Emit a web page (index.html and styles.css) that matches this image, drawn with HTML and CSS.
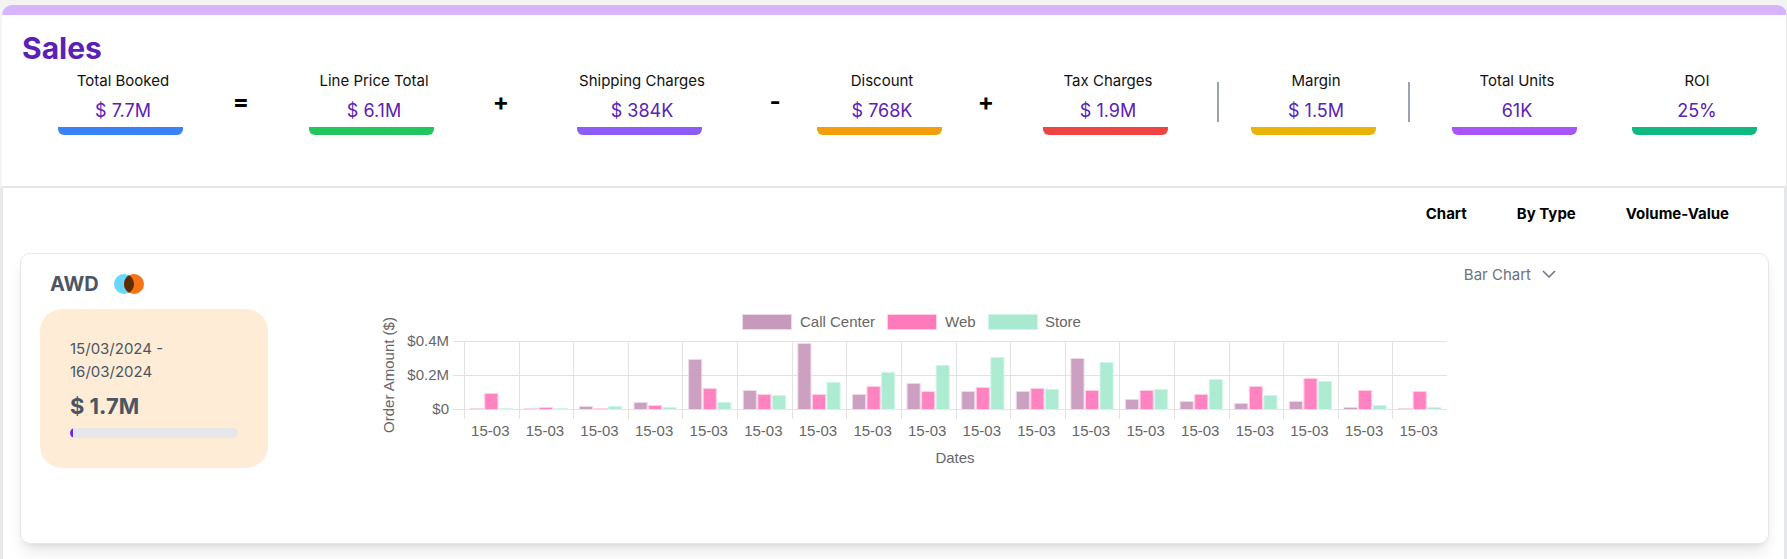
FILE: index.html
```html
<!DOCTYPE html>
<html lang="en">

<head>
    <meta charset="UTF-8">
    <meta name="viewport" content="width=device-width, initial-scale=1.0">
    <title>Sales</title>
    <link rel="stylesheet" href="styles.css">
</head>

<body>
    <header class="summary">
        <h1>Sales</h1>
        <div class="stats">
            <div class="stat">
                <div class="stat-label">Total Booked</div>
                <div class="stat-value">$ 7.7M</div>
                <div class="stat-bar blue"></div>
            </div>
            <div class="op op-1">=</div>
            <div class="stat">
                <div class="stat-label">Line Price Total</div>
                <div class="stat-value">$ 6.1M</div>
                <div class="stat-bar green"></div>
            </div>
            <div class="op op-2">+</div>
            <div class="stat">
                <div class="stat-label">Shipping Charges</div>
                <div class="stat-value">$ 384K</div>
                <div class="stat-bar violet"></div>
            </div>
            <div class="op op-3">-</div>
            <div class="stat">
                <div class="stat-label">Discount</div>
                <div class="stat-value">$ 768K</div>
                <div class="stat-bar amber"></div>
            </div>
            <div class="op op-4">+</div>
            <div class="stat">
                <div class="stat-label">Tax Charges</div>
                <div class="stat-value">$ 1.9M</div>
                <div class="stat-bar red"></div>
            </div>
            <div class="divider divider-1"></div>
            <div class="stat">
                <div class="stat-label">Margin</div>
                <div class="stat-value">$ 1.5M</div>
                <div class="stat-bar yellow"></div>
            </div>
            <div class="divider divider-2"></div>
            <div class="stat stat-units">
                <div class="stat-label">Total Units</div>
                <div class="stat-value">61K</div>
                <div class="stat-bar purple"></div>
            </div>
            <div class="stat">
                <div class="stat-label">ROI</div>
                <div class="stat-value">25%</div>
                <div class="stat-bar emerald"></div>
            </div>
        </div>
    </header>

    <main class="panel">
        <nav class="toolbar">
            <span>Chart</span>
            <span>By Type</span>
            <span>Volume-Value</span>
        </nav>

        <section class="card">
            <div class="card-head">
                <h2>AWD</h2>
                <svg class="brand" width="30" height="20" viewBox="0 0 30 20">
                    <circle cx="10" cy="10" r="10" fill="#67d7ff" />
                    <circle cx="20" cy="10" r="10" fill="#f97316" />
                    <path d="M15 1.34A10 10 0 0 1 15 18.66A10 10 0 0 1 15 1.34Z" fill="#5c2d00" />
                </svg>
                <div class="chart-select">
                    Bar Chart
                    <svg width="14" height="8" viewBox="0 0 14 8">
                        <path d="M1 1l6 6 6-6" fill="none" stroke="#6b7280" stroke-width="1.5" />
                    </svg>
                </div>
            </div>
            <div class="card-body">
                <div class="period">
                    <div class="period-dates">15/03/2024 - 16/03/2024</div>
                    <div class="period-total">$ 1.7M</div>
                    <div class="progress">
                        <div class="progress-fill" style="width: 2%"></div>
                    </div>
                </div>
                <svg id="chart" class="chart" width="1100" height="180" viewBox="370 300 1100 180"></svg>
            </div>
        </section>
    </main>

    <script src="chart.js"></script>
</body>

</html>
```

FILE: styles.css
```css
* {
    box-sizing: border-box;
}

body {
    font-family: Inter, Arial, sans-serif;
    background-color: #f3f3f3;
    margin: 0;
    padding: 5px 0 0;
    overflow: hidden;
}

h1,
h2 {
    margin: 0;
}

.summary {
    height: 183px;
    margin: 0 0 0 2px;
    width: 1785px;
    background-color: #fff;
    border-top: 10px solid #d8b4fe;
    border-bottom: 2px solid #e5e7eb;
    border-right: 1px solid #e5e7eb;
    border-radius: 10px 10px 0 0;
    padding: 15px 0 0 20px;
}

h1 {
    font-size: 30px;
    line-height: 36px;
    font-weight: 700;
    color: #5b21b6;
}

.stats {
    display: flex;
    align-items: flex-start;
    margin-top: 5px;
    padding-left: 36px;
}

.stat {
    width: 130px;
    flex: none;
    text-align: center;
}

.stat-units {
    margin-right: 50px;
}

.stat-label {
    font-size: 15px;
    line-height: 20px;
    color: #111;
}

.stat-value {
    margin-top: 8px;
    font-size: 18px;
    line-height: 24px;
    color: #5b21b6;
}

.stat-bar {
    width: 125px;
    height: 8px;
    margin-top: 4px;
    border-radius: 0 0 6px 6px;
}

.blue { background-color: #3b82f6; }
.green { background-color: #22c55e; }
.violet { background-color: #8b5cf6; }
.amber { background-color: #f59e0b; }
.red { background-color: #ef4444; }
.yellow { background-color: #eab308; }
.purple { background-color: #a855f7; }
.emerald { background-color: #10b981; }

.op {
    width: 20px;
    flex: none;
    margin-top: 15px;
    text-align: center;
    font-size: 24px;
    line-height: 32px;
    font-weight: 700;
    color: #000;
}

.op-1 { margin-left: 43px; margin-right: 58px; }
.op-2 { margin-left: 52px; margin-right: 66px; }
.op-3 { margin-left: 58px; margin-right: 32px; }
.op-4 { margin-left: 29px; margin-right: 47px; }

.divider {
    width: 2px;
    height: 40px;
    flex: none;
    margin-top: 11px;
    background-color: #9ca3af;
}

.divider-1 { margin-left: 44px; margin-right: 32px; }
.divider-2 { margin-left: 27px; margin-right: 42px; }

.panel {
    height: 371px;
    margin-left: 0;
    width: 1787px;
    background-color: #fff;
    border-left: 3px solid #e5e7eb;
    border-right: 3px solid #e5e7eb;
    padding: 0 15px 0 17px;
}

.toolbar {
    display: flex;
    justify-content: flex-end;
    gap: 50px;
    height: 65px;
    padding: 16px 40px 0 0;
    font-size: 15px;
    line-height: 20px;
    font-weight: 700;
    color: #000;
}

.card {
    height: 291px;
    background-color: #fff;
    border: 1px solid #e5e7eb;
    border-radius: 10px;
    box-shadow: 0 10px 15px -3px rgba(0, 0, 0, 0.1), 0 4px 6px -4px rgba(0, 0, 0, 0.1);
}

.card-head {
    display: flex;
    align-items: center;
    height: 20px;
    margin-top: 20px;
    padding-left: 29px;
}

h2 {
    font-size: 20px;
    line-height: 20px;
    font-weight: 700;
    color: #4b5563;
}

.brand {
    margin-left: 15px;
}

.chart-select {
    display: flex;
    align-items: center;
    gap: 11px;
    margin-left: auto;
    margin-right: 212px;
    margin-top: -20px;
    font-size: 15px;
    color: #6b7280;
}

.card-body {
    display: flex;
    align-items: flex-start;
    margin-top: 15px;
    padding-left: 19px;
}

.period {
    width: 228px;
    height: 159px;
    flex: none;
    padding: 28px 30px 0;
    background-color: #feecd6;
    border-radius: 22px;
}

.period-dates {
    font-size: 15px;
    line-height: 23px;
    color: #4b5563;
}

.period-total {
    margin-top: 8px;
    font-size: 22px;
    line-height: 30px;
    font-weight: 700;
    color: #4b5563;
}

.progress {
    height: 10px;
    margin-top: 7px;
    background-color: #e5e7eb;
    border-radius: 5px;
    overflow: hidden;
}

.progress-fill {
    height: 100%;
    background-color: #6d28d9;
}

.chart {
    flex: none;
    margin-top: -9px;
    margin-left: 102px;
}

.chart text {
    font-family: "Liberation Sans", Arial, sans-serif;
    font-size: 15px;
    fill: #666;
}
```

FILE: chart.js
```js
// Heights of the bars in pixels above the zero line: call center, web, store
const data = [
    [1, 16, 1], [1, 2, 1], [3, 1, 3], [7, 4, 2], [50, 21, 7], [19, 15, 14],
    [66, 15, 27], [15, 23, 37], [26, 18, 44], [18, 22, 52], [18, 21, 20], [51, 19, 47],
    [10, 19, 20], [8, 15, 30], [6, 23, 14], [8, 31, 28], [2, 19, 4], [1, 18, 2]
];

const series = [
    { name: 'Call Center', fill: '#c799bb', edge: '#ecdae8', box: 742, text: 800 },
    { name: 'Web', fill: '#ff7abb', edge: '#ffcfe5', box: 887, text: 945 },
    { name: 'Store', fill: '#a8e9d0', edge: '#d3f5e8', box: 988, text: 1045 }
];

const chart = document.getElementById('chart');
const left = 464;
const right = 1447;
const zero = 409.5;
const step = (right - left) / data.length;

function add(tag, attrs, text) {
    const el = document.createElementNS('http://www.w3.org/2000/svg', tag);
    for (const key in attrs) {
        el.setAttribute(key, attrs[key]);
    }
    if (text) el.textContent = text;
    chart.appendChild(el);
    return el;
}

function line(x1, y1, x2, y2) {
    add('line', { x1, y1, x2, y2, stroke: '#e2e2e2', 'stroke-width': 1 });
}

// Grid
[[341.5, '$0.4M'], [375.5, '$0.2M'], [zero, '$0']].forEach(function (tick) {
    line(453, tick[0], right, tick[0]);
    add('text', { x: 449, y: tick[0] + 4.5, 'text-anchor': 'end' }, tick[1]);
});

for (let i = 0; i < data.length; i++) {
    const x = Math.round(left + i * step) + 0.5;
    line(x, 341, x, 419);
    add('text', { x: left + (i + 0.5) * step - 1, y: 436, 'text-anchor': 'middle' }, '15-03');
}

// Bars
data.forEach(function (group, i) {
    const center = left + (i + 0.5) * step;
    group.forEach(function (height, s) {
        add('rect', {
            x: center + (s - 1) * 14.56 - 6.55,
            y: zero - height,
            width: 13.1,
            height: height,
            fill: series[s].fill,
            'fill-opacity': 0.93,
            stroke: series[s].edge,
            'stroke-width': 1
        });
    });
});

// Legend
series.forEach(function (s) {
    add('rect', { x: s.box + 0.5, y: 314.5, width: 49, height: 15, fill: s.fill, stroke: s.edge });
    add('text', { x: s.text, y: 327 }, s.name);
});

// Axis titles
add('text', { x: 955, y: 463, 'text-anchor': 'middle' }, 'Dates');
add('text', { transform: 'translate(393.5 375) rotate(-90)', 'text-anchor': 'middle' }, 'Order Amount ($)');
```
